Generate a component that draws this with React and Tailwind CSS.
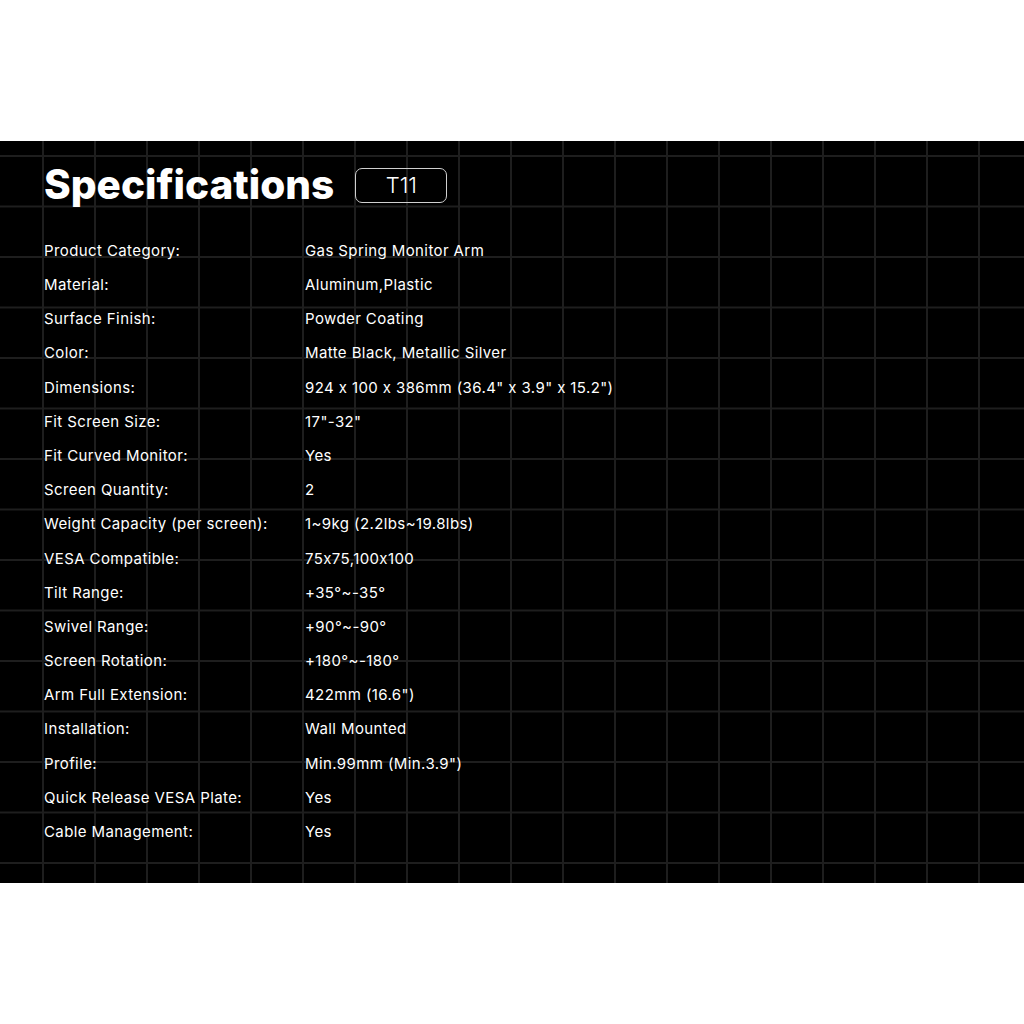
import React from 'react';

const specs = [
  ['Product Category:', 'Gas Spring Monitor Arm'],
  ['Material:', 'Aluminum,Plastic'],
  ['Surface Finish:', 'Powder Coating'],
  ['Color:', 'Matte Black, Metallic Silver'],
  ['Dimensions:', '924 x 100 x 386mm (36.4" x 3.9" x 15.2")'],
  ['Fit Screen Size:', '17"-32"'],
  ['Fit Curved Monitor:', 'Yes'],
  ['Screen Quantity:', '2'],
  ['Weight Capacity (per screen):', '1~9kg (2.2lbs~19.8lbs)'],
  ['VESA Compatible:', '75x75,100x100'],
  ['Tilt Range:', '+35°~-35°'],
  ['Swivel Range:', '+90°~-90°'],
  ['Screen Rotation:', '+180°~-180°'],
  ['Arm Full Extension:', '422mm (16.6")'],
  ['Installation:', 'Wall Mounted'],
  ['Profile:', 'Min.99mm (Min.3.9")'],
  ['Quick Release VESA Plate:', 'Yes'],
  ['Cable Management:', 'Yes'],
];

export default function App() {
  return (
    <div className="w-[1024px] h-[1024px] bg-white font-['Inter',_'Liberation_Sans',_sans-serif] [font-feature-settings:'calt'_0]">
      <div className="h-[141px]" />
      {/* grid panel */}
      <div className="h-[742px] bg-black bg-[linear-gradient(to_right,#1e1e1e_2px,transparent_2px),linear-gradient(to_bottom,#1e1e1e_2px,transparent_2px)] bg-[size:52px_50.5px] bg-[position:42px_14px] pl-[44px] pt-[24px]">
        <div className="flex items-center gap-[21px] h-[40px]">
          <h1 className="text-white text-[40.5px] leading-[40px] font-extrabold">Specifications</h1>
          <div className="w-[92px] h-[35px] border border-[#d0d0d0] rounded-[7px] flex items-center justify-center text-white text-[22px] font-light">
            T11
          </div>
        </div>
        <div className="mt-[29px] flex flex-col">
          {specs.map(([k, v]) => (
            <div key={k} className="flex h-[34.2px] items-center text-white text-[15px] tracking-[0.4px]">
              <span className="w-[261px] shrink-0">{k}</span>
              <span>{v}</span>
            </div>
          ))}
        </div>
      </div>
    </div>
  );
}
